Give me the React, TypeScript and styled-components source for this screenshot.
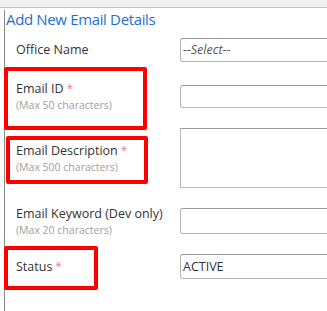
import React from "react";
import styled, { createGlobalStyle } from "styled-components";

const Global = createGlobalStyle`
  html, body { margin: 0; padding: 0; background: #fff; }
  body { font-family: "Open Sans", "Noto Sans", Arial, sans-serif; }
  * { box-sizing: border-box; }
`;

const Page = styled.div`
  position: relative;
  width: 327px;
  height: 311px;
  overflow: hidden;
  background: #fff;
`;

const TopBar = styled.div`
  height: 8px;
  background: #efefef;
  border-bottom: 1px solid #c4c4c4;
`;

const Panel = styled.div`
  margin-left: 4px;
  border-left: 1px solid #8a8a8a;
  height: 303px;
  padding-left: 1px;
`;

const Title = styled.h2`
  margin: 2px 0 0 0;
  font-size: 15px;
  line-height: 19px;
  font-weight: 400;
  color: #1f6fcf;
  letter-spacing: -0.35px;
`;

const Form = styled.div`
  display: flex;
  flex-direction: column;
`;

const Row = styled.div<{ $h: number }>`
  display: grid;
  grid-template-columns: 174px 1fr;
  align-items: center;
  height: ${(p) => p.$h}px;
`;

const LabelBlock = styled.div`
  padding-left: 10px;
  display: flex;
  flex-direction: column;
`;

const Label = styled.span`
  font-size: 12.5px;
  line-height: 17px;
  color: #333;
`;

const Req = styled.span`
  color: #f07088;
  font-size: 11px;
  vertical-align: 1px;
`;

const Hint = styled.span`
  font-size: 10.5px;
  line-height: 16px;
  color: #a0a0a0;
`;

const Control = styled.div<{ $h: number }>`
  height: ${(p) => p.$h}px;
  width: 170px;
  border: 1px solid #b4b4b4;
  border-top-color: #999;
  border-radius: ${(p) => (p.$h > 40 ? 1 : 3)}px;
  background: #fff;
  display: flex;
  align-items: center;
  padding-left: 2px;
  font-size: 12.5px;
  color: #333;
`;

const Placeholder = styled.span`
  font-style: italic;
  color: #555;
`;

const Mark = styled.div<{ $x: number; $y: number; $w: number; $h: number }>`
  position: absolute;
  left: ${(p) => p.$x}px;
  top: ${(p) => p.$y}px;
  width: ${(p) => p.$w}px;
  height: ${(p) => p.$h}px;
  border: 4px solid #fe0000;
  border-radius: 2px;
  pointer-events: none;
`;

export default function App() {
  return (
    <Page>
      <Global />
      <TopBar />
      <Panel>
        <Title>Add New Email Details</Title>
        <Form>
          <Row $h={41}>
            <LabelBlock>
              <Label>Office Name</Label>
            </LabelBlock>
            <Control $h={24}>
              <Placeholder>--Select--</Placeholder>
            </Control>
          </Row>
          <Row $h={52}>
            <LabelBlock>
              <Label>
                Email ID <Req>*</Req>
              </Label>
              <Hint>(Max 50 characters)</Hint>
            </LabelBlock>
            <Control $h={23} />
          </Row>
          <Row $h={71}>
            <LabelBlock>
              <Label>
                Email Description <Req>*</Req>
              </Label>
              <Hint>(Max 500 characters)</Hint>
            </LabelBlock>
            <Control $h={60} />
          </Row>
          <Row $h={56}>
            <LabelBlock>
              <Label>Email Keyword (Dev only)</Label>
              <Hint>(Max 20 characters)</Hint>
            </LabelBlock>
            <Control $h={26} />
          </Row>
          <Row $h={34}>
            <LabelBlock>
              <Label>
                Status <Req>*</Req>
              </Label>
            </LabelBlock>
            <Control $h={25}>ACTIVE</Control>
          </Row>
        </Form>
      </Panel>
      <Mark $x={4} $y={67} $w={143} $h={63} />
      <Mark $x={6} $y={136} $w={142} $h={48} />
      <Mark $x={4} $y={246} $w={94} $h={44} />
    </Page>
  );
}
